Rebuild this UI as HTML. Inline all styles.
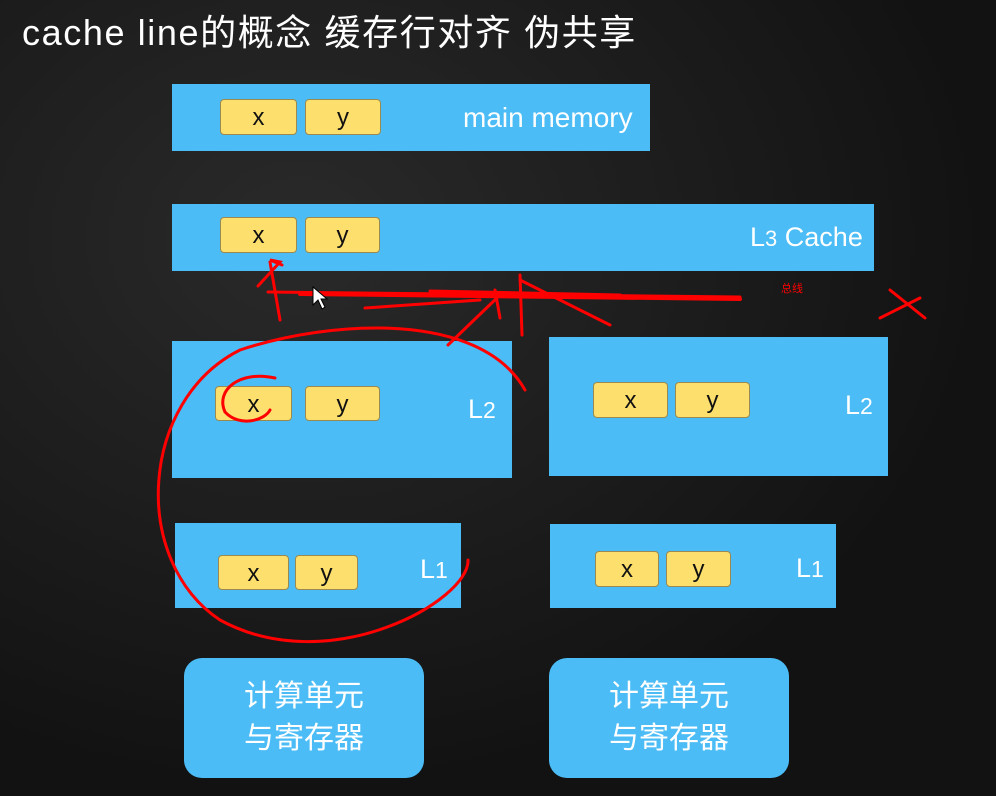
<!DOCTYPE html>
<html><head><meta charset="utf-8"><style>
body{margin:0;width:996px;height:796px;overflow:hidden;background:#161616;position:relative;font-family:"Liberation Sans","Noto Sans CJK SC",sans-serif}
.bg{position:absolute;inset:0;background:radial-gradient(ellipse at 30% 30%,#2a2a2a,#121212 70%)}
.t{position:absolute;left:22px;top:4px;color:#fff;font-size:36px;white-space:nowrap;letter-spacing:1.6px}
.b{position:absolute;background:#4bbcf5}
.c{position:absolute;background:#fddf6e;border:1px solid #9a8a50;border-radius:4px;box-sizing:border-box;text-align:center;font-size:24px;color:#111}
.l{position:absolute;color:#fff;font-size:27px}
.u{position:absolute;background:#4bbcf5;border-radius:18px;color:#fff;font-size:30px;text-align:center;line-height:42px;padding-top:18px;box-sizing:border-box}
</style></head><body>
<div class="bg"></div>
<div class="t">cache line的概念 缓存行对齐 伪共享</div>

<div class="b" style="left:172px;top:84px;width:478px;height:67px"></div>
<div class="c" style="left:220px;top:99px;width:77px;height:36px;line-height:36px">x</div>
<div class="c" style="left:305px;top:99px;width:76px;height:36px;line-height:36px">y</div>
<div class="l" style="left:463px;top:102px;font-size:28px">main memory</div>

<div class="b" style="left:172px;top:204px;width:702px;height:67px"></div>
<div class="c" style="left:220px;top:217px;width:77px;height:36px;line-height:36px">x</div>
<div class="c" style="left:305px;top:217px;width:75px;height:36px;line-height:36px">y</div>
<div class="l" style="left:750px;top:222px;font-size:27px">L<span style="font-size:22px">3</span> Cache</div>

<div class="b" style="left:172px;top:341px;width:340px;height:137px"></div>
<div class="c" style="left:215px;top:386px;width:77px;height:35px;line-height:35px">x</div>
<div class="c" style="left:305px;top:386px;width:75px;height:35px;line-height:35px">y</div>
<div class="l" style="left:468px;top:394px">L<span style="font-size:23px">2</span></div>

<div class="b" style="left:549px;top:337px;width:339px;height:139px"></div>
<div class="c" style="left:593px;top:382px;width:75px;height:36px;line-height:36px">x</div>
<div class="c" style="left:675px;top:382px;width:75px;height:36px;line-height:36px">y</div>
<div class="l" style="left:845px;top:390px">L<span style="font-size:23px">2</span></div>

<div class="b" style="left:175px;top:523px;width:286px;height:85px"></div>
<div class="c" style="left:218px;top:555px;width:71px;height:35px;line-height:35px">x</div>
<div class="c" style="left:295px;top:555px;width:63px;height:35px;line-height:35px">y</div>
<div class="l" style="left:420px;top:554px">L<span style="font-size:23px">1</span></div>

<div class="b" style="left:550px;top:524px;width:286px;height:84px"></div>
<div class="c" style="left:595px;top:551px;width:64px;height:36px;line-height:36px">x</div>
<div class="c" style="left:666px;top:551px;width:65px;height:36px;line-height:36px">y</div>
<div class="l" style="left:796px;top:553px">L<span style="font-size:23px">1</span></div>

<div class="u" style="left:184px;top:658px;width:240px;height:120px">计算单元<br>与寄存器</div>
<div class="u" style="left:549px;top:658px;width:240px;height:120px">计算单元<br>与寄存器</div>

<svg style="position:absolute;left:0;top:0" width="996" height="796">
<g fill="none" stroke="#f00" stroke-width="3" stroke-linecap="round">
<path d="M268 292 L740 297"/><path d="M300 294 L740 299" stroke-width="4"/>
<path d="M430 291 L620 295"/><path d="M365 308 L480 300"/>
<path d="M270 262 L280 320"/><path d="M258 286 L280 262 L270 260 L282 265"/>
<path d="M448 345 L500 295"/><path d="M495 290 L500 318"/><path d="M520 275 L522 335"/>
<path d="M520 280 L610 325"/>
<path d="M890 290 L925 318"/><path d="M880 318 L920 298"/>
<path d="M525 390 C480 310 330 320 240 350 C140 400 130 560 220 620 C330 680 470 600 468 560"/>
<path d="M275 378 C240 370 215 390 225 412 C240 428 265 420 270 410"/>
</g>
<text x="781" y="292" fill="#f00" font-size="11" font-family="Noto Sans CJK SC,sans-serif">总线</text>
<path d="M313 287 L313 305 L318 300 L322 309 L325 307 L321 299 L327 299 Z" fill="#fff" stroke="#000" stroke-width="1"/>
</svg>
</body></html>
